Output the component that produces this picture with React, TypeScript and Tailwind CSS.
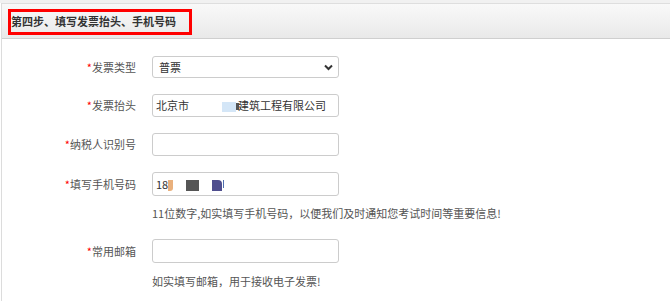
const font = "font-['Noto_Sans_CJK_SC','Noto_Sans',sans-serif]";

function Label({ text }: { text: string }) {
  return (
    <div className="w-[134px] shrink-0 text-right text-[11px] text-[#555] pr-0">
      <span className="text-[#f00]">*</span>
      {text}
    </div>
  );
}

export default function App() {
  return (
    <div className={`w-[670px] h-[301px] bg-white overflow-hidden ${font}`}>
      <div className="h-[3px] bg-[#f1f1f1]" />
      <div className="ml-[1px] border-l border-[#dcdcdc] h-[298px]">
        {/* header */}
        <div className="h-[36px] border-t border-b border-t-[#dedede] border-b-[#cfcfcf] bg-gradient-to-b from-[#f9f9f9] to-[#e9e9e9] pt-[3px] pl-[6px]">
          <div className="inline-flex h-[26px] items-center border-[3px] border-[#ff0000] pl-[0px] pr-[13px]">
            <span className="text-[11px] font-bold text-[#333] leading-none">第四步、填写发票抬头、手机号码</span>
          </div>
        </div>

        {/* form */}
        <div className="flex flex-col pt-[17px]">
          <div className="flex items-center h-[22px]">
            <Label text="发票类型" />
            <div className="ml-[16px] relative w-[187px] h-[22px] border border-[#cccccc] rounded-[3px] flex items-center pl-[6px] text-[11px] text-[#333]">
              普票
              <svg className="absolute right-[5px] top-[7px]" width="9" height="7" viewBox="0 0 9 7">
                <path d="M1 1.5 L4.5 5 L8 1.5" fill="none" stroke="#333" strokeWidth="2" />
              </svg>
            </div>
          </div>

          <div className="flex items-center h-[23px] mt-[16px]">
            <Label text="发票抬头" />
            <div className="ml-[16px] w-[187px] h-[23px] border border-[#cccccc] rounded-[3px] flex items-center pl-[3px] text-[11px] text-[#333]">
              <span>北京市</span>
              <span className="w-[33px]" />
              <span className="w-[14px] h-[10px] bg-[#d4e6f7] mt-[3px]" />
              <span className="w-[3px] h-[7px] bg-[#555] mt-[1px]" />
              <span className="-ml-[1px]">建筑工程有限公司</span>
            </div>
          </div>

          <div className="flex items-center h-[23px] mt-[16px]">
            <Label text="纳税人识别号" />
            <div className="ml-[16px] w-[187px] h-[23px] border border-[#cccccc] rounded-[3px]" />
          </div>

          <div className="flex items-center h-[24px] mt-[16px]">
            <Label text="填写手机号码" />
            <div className="ml-[16px] w-[187px] h-[24px] border border-[#cccccc] rounded-[3px] flex items-center pl-[3px] text-[11px] text-[#333]">
              <span>18</span>
              <span className="w-[5px] h-[11px] bg-[#e9b07c] mt-[3px] rounded-br-[3px]" />
              <span className="w-[13px] h-[11px] bg-[#555555] ml-[13px] mt-[3px]" />
              <span className="w-[10px] h-[11px] bg-[#4f4e8e] ml-[13px] mt-[3px] rounded-tr-[4px]" />
              <span className="w-[1px] h-[8px] bg-[#4f6fb0] ml-[1px]" />
            </div>
          </div>

          <div className="pl-[150px] mt-[7px] h-[20px] leading-[20px] text-[11px] text-[#555]">
            11位数字,如实填写手机号码，以便我们及时通知您考试时间等重要信息!
          </div>

          <div className="flex items-center h-[24px] mt-[16px]">
            <Label text="常用邮箱" />
            <div className="ml-[16px] w-[187px] h-[24px] border border-[#cccccc] rounded-[3px]" />
          </div>

          <div className="pl-[150px] mt-[8px] h-[20px] leading-[20px] text-[11px] text-[#555]">
            如实填写邮箱，用于接收电子发票!
          </div>
        </div>
      </div>
    </div>
  );
}
